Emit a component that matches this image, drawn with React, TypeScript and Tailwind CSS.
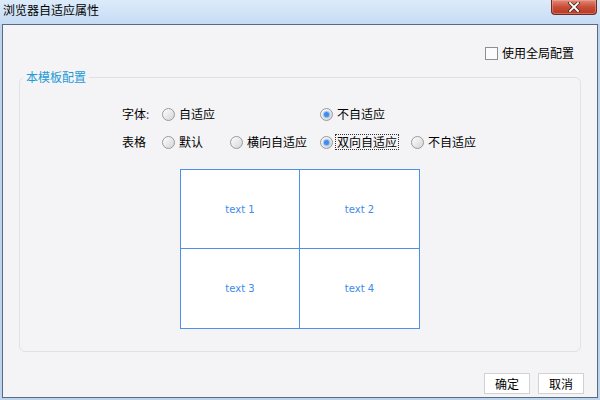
import React from "react";

const cjk = { fontFamily: '"Noto Sans CJK SC", "Noto Sans", sans-serif' } as React.CSSProperties;

function Radio({ checked }: { checked?: boolean }) {
  return (
    <span className="relative inline-flex w-[13px] h-[13px] shrink-0 items-center justify-center rounded-full border border-[#9a9a9a] bg-gradient-to-br from-[#ffffff] to-[#d4d4d4]">
      {checked && (
        <span className="block w-[5px] h-[5px] rounded-full bg-[#3f8cf0] shadow-[0_0_1px_1px_rgba(90,160,250,0.6)]" />
      )}
    </span>
  );
}

function Option({ label, checked, focus }: { label: string; checked?: boolean; focus?: boolean }) {
  return (
    <div className="flex items-center gap-[4px] h-[16px]">
      <Radio checked={checked} />
      <span
        className={
          "text-[12px] leading-[14px] text-black " +
          (focus ? "outline outline-1 outline-dotted outline-[#333] px-[1px] -mx-[1px]" : "")
        }
      >
        {label}
      </span>
    </div>
  );
}

function Cell({ t, r, b }: { t: string; r?: boolean; b?: boolean }) {
  return (
    <div
      className={
        "flex items-center justify-center bg-white text-[10px] text-[#3d8be8] " +
        (r ? "border-r border-[#4a90ec] " : "") +
        (b ? "border-b border-[#4a90ec]" : "")
      }
      style={{ fontFamily: '"DejaVu Sans", sans-serif' }}
    >
      {t}
    </div>
  );
}

export default function App() {
  return (
    <div className="w-[600px] h-[400px] bg-[#bcd4ee] flex flex-col overflow-hidden" style={cjk}>
      {/* title bar */}
      <div className="relative h-[24px] shrink-0 bg-gradient-to-b from-[#dcebfa] to-[#c6dcf4] flex items-center pl-[3px]">
        <span className="text-[12px] leading-[14px] text-black -mt-[4px]">浏览器自适应属性</span>
        <div className="absolute right-[3px] top-0 w-[46px] h-[15px] rounded-b-[4px] border border-t-0 border-[#6e2b22] bg-gradient-to-b from-[#e08a78] via-[#c94d36] to-[#b53a28] flex items-center justify-center shadow-[inset_0_0_0_1px_rgba(255,200,190,0.35)]">
          <svg width="12" height="10" viewBox="0 0 12 10">
            <path d="M2 1 L10 9 M10 1 L2 9" stroke="#4a2a26" strokeWidth="3.4" strokeLinecap="square" />
            <path d="M2 1 L10 9 M10 1 L2 9" stroke="#ffffff" strokeWidth="1.8" strokeLinecap="square" />
          </svg>
        </div>
      </div>

      {/* body */}
      <div className="flex-1 ml-[2px] mr-[2px] mb-[2px] border border-[#5b6a7c] bg-[#f4f4f6] flex flex-col">
        {/* global checkbox */}
        <div className="mt-[20px] h-[16px] flex items-center justify-end pr-[23px] gap-[4px]">
          <span className="w-[13px] h-[13px] border border-[#8e8f8f] bg-[#fbfbfb]" />
          <span className="text-[12px] leading-[14px] text-black">使用全局配置</span>
        </div>

        {/* group */}
        <fieldset className="mt-[8px] mx-[16px] border border-[#e1e1e5] rounded-[6px] px-0 pb-[22px]">
          <legend className="ml-[3px] px-[3px] text-[12px] leading-[16px] text-[#1e9ad8]">本模板配置</legend>
          <div className="pt-[21px] pl-[102px]">
            <div className="grid grid-cols-[40px_68px_90px_91px_auto] items-center h-[16px]">
              <span className="text-[12px] leading-[14px] text-black">
                字体<span className="text-[#7a2a8a]">:</span>
              </span>
              <div className="col-span-2">
                <Option label="自适应" />
              </div>
              <div className="col-span-2">
                <Option label="不自适应" checked />
              </div>
            </div>
            <div className="mt-[12px] grid grid-cols-[40px_68px_90px_91px_auto] items-center h-[16px]">
              <span className="text-[12px] leading-[14px] text-black">表格</span>
              <Option label="默认" />
              <Option label="横向自适应" />
              <Option label="双向自适应" checked focus />
              <Option label="不自适应" />
            </div>
          </div>
          <div className="mt-[19px] flex justify-center">
            <div className="w-[240px] h-[160px] border border-[#4a90ec] grid grid-cols-2 grid-rows-2">
              <Cell t="text 1" r b />
              <Cell t="text 2" b />
              <Cell t="text 3" r />
              <Cell t="text 4" />
            </div>
          </div>
        </fieldset>

        {/* buttons */}
        <div className="mt-[21px] flex justify-end gap-[8px] pr-[13px]">
          <button className="w-[46px] h-[21px] border border-[#d2d2d2] bg-white text-[12px] leading-[14px] text-black">确定</button>
          <button className="w-[46px] h-[21px] border border-[#d2d2d2] bg-white text-[12px] leading-[14px] text-black">取消</button>
        </div>
      </div>
    </div>
  );
}
